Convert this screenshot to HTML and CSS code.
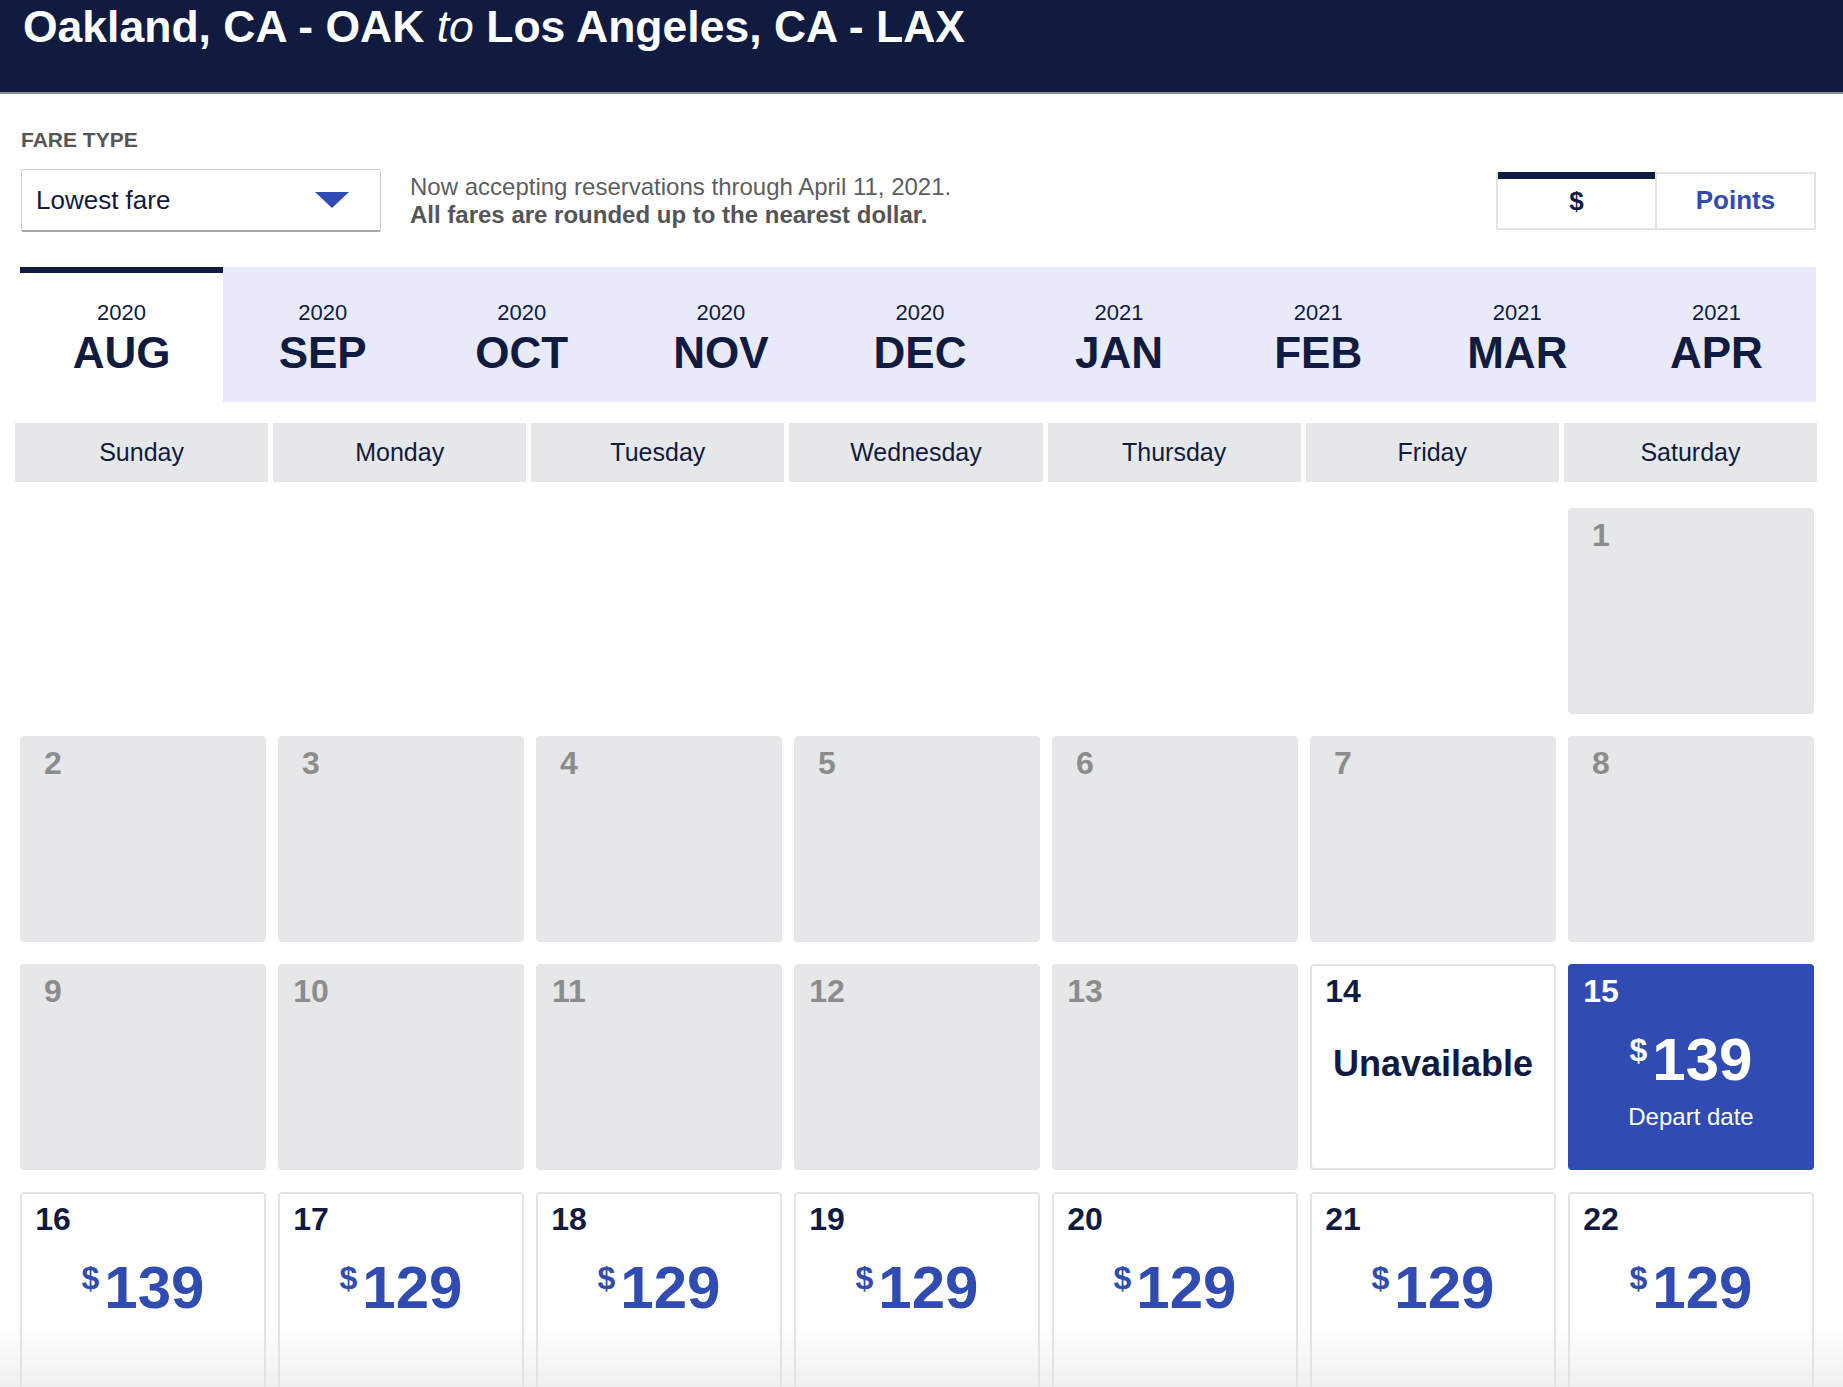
FILE: index.html
```html
<!DOCTYPE html>
<html lang="en">
<head>
  <meta charset="UTF-8" />
  <meta name="viewport" content="width=device-width, initial-scale=1.0"/>
  <title>Select Flights</title>
  <link rel="stylesheet" href="styles.css">
</head>
<body>

<div class="topbar">
  <h1>Oakland, CA - OAK <em>to</em> Los Angeles, CA - LAX</h1>
</div>

<div class="content">
  <div class="fare-label">FARE TYPE</div>
  <div class="fare-row">
    <div class="fare-select">
      <span>Lowest fare</span>
      <svg class="caret" width="34" height="16" viewBox="0 0 34 16"><path d="M0 0 L34 0 L17 16 Z" fill="#304cb2"/></svg>
    </div>
    <div class="fare-info">
      Now accepting reservations through April 11, 2021.<br>
      <b>All fares are rounded up to the nearest dollar.</b>
    </div>
    <div class="unit-toggle">
      <div class="opt active">$</div>
      <div class="opt points">Points</div>
    </div>
  </div>

  <div class="months">
    <div class="month active"><span class="yr">2020</span><span class="mo">AUG</span></div>
    <div class="month"><span class="yr">2020</span><span class="mo">SEP</span></div>
    <div class="month"><span class="yr">2020</span><span class="mo">OCT</span></div>
    <div class="month"><span class="yr">2020</span><span class="mo">NOV</span></div>
    <div class="month"><span class="yr">2020</span><span class="mo">DEC</span></div>
    <div class="month"><span class="yr">2021</span><span class="mo">JAN</span></div>
    <div class="month"><span class="yr">2021</span><span class="mo">FEB</span></div>
    <div class="month"><span class="yr">2021</span><span class="mo">MAR</span></div>
    <div class="month"><span class="yr">2021</span><span class="mo">APR</span></div>
  </div>

  <div class="weekdays">
    <div>Sunday</div><div>Monday</div><div>Tuesday</div><div>Wednesday</div>
    <div>Thursday</div><div>Friday</div><div>Saturday</div>
  </div>

  <div class="calendar">
    <div></div><div></div><div></div><div></div><div></div><div></div>
    <div class="day past"><span class="num">1</span></div>

    <div class="day past"><span class="num">2</span></div>
    <div class="day past"><span class="num">3</span></div>
    <div class="day past"><span class="num">4</span></div>
    <div class="day past"><span class="num">5</span></div>
    <div class="day past"><span class="num">6</span></div>
    <div class="day past"><span class="num">7</span></div>
    <div class="day past"><span class="num">8</span></div>

    <div class="day past"><span class="num">9</span></div>
    <div class="day past"><span class="num">10</span></div>
    <div class="day past"><span class="num">11</span></div>
    <div class="day past"><span class="num">12</span></div>
    <div class="day past"><span class="num">13</span></div>
    <div class="day open"><span class="num">14</span><div class="status">Unavailable</div></div>
    <div class="day selected">
      <span class="num">15</span>
      <div class="price"><span class="cur">$</span><span class="amt">139</span></div>
      <div class="note">Depart date</div>
    </div>

    <div class="day open"><span class="num">16</span><div class="price"><span class="cur">$</span><span class="amt">139</span></div></div>
    <div class="day open"><span class="num">17</span><div class="price"><span class="cur">$</span><span class="amt">129</span></div></div>
    <div class="day open"><span class="num">18</span><div class="price"><span class="cur">$</span><span class="amt">129</span></div></div>
    <div class="day open"><span class="num">19</span><div class="price"><span class="cur">$</span><span class="amt">129</span></div></div>
    <div class="day open"><span class="num">20</span><div class="price"><span class="cur">$</span><span class="amt">129</span></div></div>
    <div class="day open"><span class="num">21</span><div class="price"><span class="cur">$</span><span class="amt">129</span></div></div>
    <div class="day open"><span class="num">22</span><div class="price"><span class="cur">$</span><span class="amt">129</span></div></div>
  </div>
</div>

<div class="fade"></div>

</body>
</html>
```

FILE: styles.css
```css
* { box-sizing: border-box; margin: 0; padding: 0; }
html, body { height: 100%; overflow: hidden; }
body {
  font-family: "Liberation Sans", Arial, sans-serif;
  color: #111b40;
  background: #fff;
}

.topbar {
  background: #111b40;
  height: 94px;
  border-bottom: 2px solid #8d8d8d;
  padding: 5px 0 0 23px;
}
.topbar h1 {
  font-size: 44.5px;
  line-height: 1;
  font-weight: bold;
  color: #fff;
}
.topbar h1 em { font-weight: normal; }

.content {
  padding: 0 27px 0 20px;
}

.fare-label {
  margin-top: 35px;
  padding-left: 1px;
  font-size: 21px;
  line-height: 1;
  font-weight: bold;
  color: #555;
}

.fare-row {
  display: flex;
  align-items: center;
  margin-top: 19px;
}

.fare-select {
  width: 360px;
  height: 63px;
  margin-left: 1px;
  display: flex;
  align-items: center;
  justify-content: space-between;
  padding: 0 31px 0 14px;
  border: 1px solid #cfcfcf;
  border-bottom: 2px solid #a9a9a9;
  border-radius: 2px;
  font-size: 26px;
}

.fare-info {
  margin-left: 29px;
  font-size: 24px;
  line-height: 28px;
  color: #5e5e5e;
}
.fare-info b { color: #555; }

.unit-toggle {
  margin-left: auto;
  width: 320px;
  height: 58px;
  display: flex;
  border: 2px solid #e3e3e3;
}
.unit-toggle .opt {
  flex: 1;
  display: flex;
  align-items: center;
  justify-content: center;
  font-size: 26px;
  font-weight: bold;
}
.unit-toggle .opt.active {
  margin-top: -2px;
  border-top: 7px solid #111b40;
  padding-bottom: 3px;
}
.unit-toggle .opt + .opt { border-left: 2px solid #e3e3e3; }
.unit-toggle .points { color: #304cb2; }

.months {
  margin-top: 35px;
  height: 135px;
  display: flex;
  background: #e8eaf7;
}
.month {
  flex: 1;
  text-align: center;
  padding-top: 35px;
}
.month.active {
  flex: 1.02;
  background: #fff;
  border-top: 6px solid #111b40;
  padding-top: 29px;
}
.month .yr {
  display: block;
  font-size: 22px;
  line-height: 1;
}
.month .mo {
  display: block;
  margin-top: 7px;
  font-size: 44px;
  line-height: 1;
  font-weight: bold;
}

.weekdays {
  margin: 21px -1px 0 -5px;
  display: grid;
  grid-template-columns: repeat(7, 1fr);
  gap: 5px;
}
.weekdays div {
  height: 59px;
  display: flex;
  align-items: center;
  justify-content: center;
  background: #e6e7e8;
  font-size: 25px;
}

.calendar {
  margin: 26px 2px 0 0;
  display: grid;
  grid-template-columns: repeat(7, 1fr);
  grid-auto-rows: 206px;
  column-gap: 12px;
  row-gap: 22px;
}

.day {
  border-radius: 4px;
  padding: 11px 15px;
}
.day.past {
  background: #e6e7e9;
  color: #8c8c8c;
}
.day.open {
  background: #fff;
  border: 2px solid #e4e4e4;
  padding: 9px 13px;
}
.day.selected {
  background: #304cb2;
  color: #fff;
}

.num {
  display: block;
  width: 36px;
  text-align: center;
  font-size: 32px;
  line-height: 1;
  font-weight: bold;
}

.price {
  display: flex;
  justify-content: center;
  margin-top: 23px;
  color: #304cb2;
  font-weight: bold;
}
.day.selected .price { color: #fff; }
.price .cur {
  font-size: 32px;
  line-height: 1;
  margin: 4px 5px 0 0;
}
.price .amt {
  font-size: 60px;
  line-height: 1;
}

.status {
  margin-top: 36px;
  text-align: center;
  font-size: 36px;
  font-weight: bold;
}

.note {
  margin-top: 13px;
  text-align: center;
  font-size: 24px;
}

.fade {
  position: fixed;
  left: 0;
  right: 0;
  bottom: 0;
  height: 62px;
  background: linear-gradient(rgba(255,255,255,0), rgba(228,228,228,0.55));
  pointer-events: none;
}
```
